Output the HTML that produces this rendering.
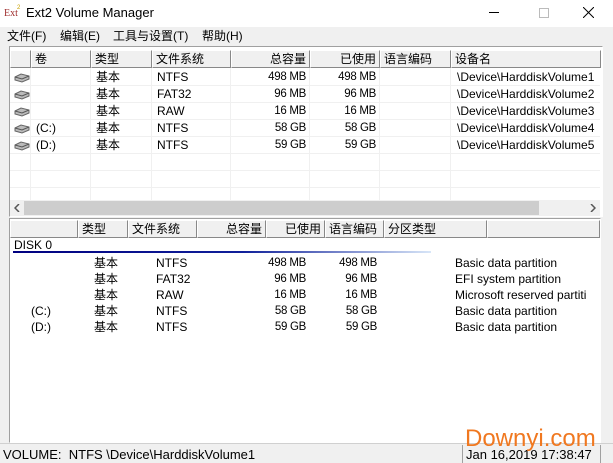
<!DOCTYPE html>
<html><head><meta charset="utf-8"><style>
*{margin:0;padding:0;box-sizing:border-box}
body{width:613px;height:463px;background:#f0f0f0;font-family:"Liberation Sans","Noto Sans CJK SC",sans-serif;font-size:12px;color:#000;position:relative;overflow:hidden}
.a{position:absolute;white-space:nowrap;line-height:15px}
.title{left:0;top:0;width:613px;height:27px;background:#fff}
.box{background:#fff;border-top:1px solid #a0a0a0;border-left:1px solid #a0a0a0;border-right:1px solid #fff;border-bottom:1px solid #fff}
.hd{background:#f0f0f0;border-right:1px solid #888;border-bottom:1px solid #888;border-top:1px solid #fff;border-left:1px solid #fff;height:18px;line-height:16px;padding:0 3px}
.vl{width:1px;background:#f0f0f0}
.hl{height:1px;background:#f0f0f0}
.r{text-align:right}
.n{font-size:11.5px;letter-spacing:-0.3px;text-align:right}
.row>span{line-height:15px}
</style></head><body>
<div class="a title"></div>
<div class="a" style="left:4px;top:6px;font-size:10px;color:#a03030;font-family:'Liberation Serif',serif">Ext</div>
<div class="a" style="left:17px;top:1px;font-size:6px;color:#c8a000">2</div>
<div class="a" style="left:26px;top:5px;font-size:13px">Ext2 Volume Manager</div>
<div class="a" style="left:489px;top:12px;width:10px;height:1px;background:#000"></div>
<div class="a" style="left:539px;top:8px;width:10px;height:10px;border:1px solid #bbb"></div>
<svg class="a" style="left:583px;top:7px" width="11" height="11"><path d="M0 0L11 11M11 0L0 11" stroke="#000" stroke-width="1"/></svg>
<div class="a" style="left:7px;top:29px">文件(F)</div>
<div class="a" style="left:60px;top:29px">编辑(E)</div>
<div class="a" style="left:113px;top:29px">工具与设置(T)</div>
<div class="a" style="left:202px;top:29px">帮助(H)</div>

<!-- top list -->
<div class="a box" style="left:9px;top:46px;width:594px;height:171px"></div>
<div class="a hd" style="left:10px;top:50px;width:21px"></div>
<div class="a hd" style="left:31px;top:50px;width:60px">卷</div>
<div class="a hd" style="left:91px;top:50px;width:61px">类型</div>
<div class="a hd" style="left:152px;top:50px;width:79px">文件系统</div>
<div class="a hd r" style="left:231px;top:50px;width:79px">总容量</div>
<div class="a hd r" style="left:310px;top:50px;width:70px">已使用</div>
<div class="a hd" style="left:380px;top:50px;width:71px">语言编码</div>
<div class="a hd" style="left:451px;top:50px;width:150px">设备名</div>
<div class="a hl" style="left:10px;top:85px;width:590px"></div>
<div class="a hl" style="left:10px;top:102px;width:590px"></div>
<div class="a hl" style="left:10px;top:119px;width:590px"></div>
<div class="a hl" style="left:10px;top:136px;width:590px"></div>
<div class="a hl" style="left:10px;top:153px;width:590px"></div>
<div class="a hl" style="left:10px;top:170px;width:590px"></div>
<div class="a hl" style="left:10px;top:187px;width:590px"></div>
<div class="a vl" style="left:30px;top:68px;height:132px"></div>
<div class="a vl" style="left:90px;top:68px;height:132px"></div>
<div class="a vl" style="left:151px;top:68px;height:132px"></div>
<div class="a vl" style="left:230px;top:68px;height:132px"></div>
<div class="a vl" style="left:309px;top:68px;height:132px"></div>
<div class="a vl" style="left:379px;top:68px;height:132px"></div>
<div class="a vl" style="left:450px;top:68px;height:132px"></div>

<div class="a row" style="left:0;top:70px">
<svg class="a" style="left:13px;top:3px" width="18" height="10"><path d="M2 4L8 1L16 3L16 6L9 9L2 7Z" fill="#bbb" stroke="#666"/><path d="M2 4L9 6L16 3" fill="none" stroke="#555"/></svg>
<span class="a" style="left:96px">基本</span><span class="a" style="left:157px">NTFS</span><span class="a n" style="left:236px;width:70px">498 MB</span><span class="a n" style="left:306px;width:70px">498 MB</span><span class="a" style="left:457px">\Device\HarddiskVolume1</span></div>
<div class="a row" style="left:0;top:87px">
<svg class="a" style="left:13px;top:3px" width="18" height="10"><path d="M2 4L8 1L16 3L16 6L9 9L2 7Z" fill="#bbb" stroke="#666"/><path d="M2 4L9 6L16 3" fill="none" stroke="#555"/></svg>
<span class="a" style="left:96px">基本</span><span class="a" style="left:157px">FAT32</span><span class="a n" style="left:236px;width:70px">96 MB</span><span class="a n" style="left:306px;width:70px">96 MB</span><span class="a" style="left:457px">\Device\HarddiskVolume2</span></div>
<div class="a row" style="left:0;top:104px">
<svg class="a" style="left:13px;top:3px" width="18" height="10"><path d="M2 4L8 1L16 3L16 6L9 9L2 7Z" fill="#bbb" stroke="#666"/><path d="M2 4L9 6L16 3" fill="none" stroke="#555"/></svg>
<span class="a" style="left:96px">基本</span><span class="a" style="left:157px">RAW</span><span class="a n" style="left:236px;width:70px">16 MB</span><span class="a n" style="left:306px;width:70px">16 MB</span><span class="a" style="left:457px">\Device\HarddiskVolume3</span></div>
<div class="a row" style="left:0;top:121px">
<svg class="a" style="left:13px;top:3px" width="18" height="10"><path d="M2 4L8 1L16 3L16 6L9 9L2 7Z" fill="#bbb" stroke="#666"/><path d="M2 4L9 6L16 3" fill="none" stroke="#555"/></svg>
<span class="a" style="left:36px">(C:)</span><span class="a" style="left:96px">基本</span><span class="a" style="left:157px">NTFS</span><span class="a n" style="left:236px;width:70px">58 GB</span><span class="a n" style="left:306px;width:70px">58 GB</span><span class="a" style="left:457px">\Device\HarddiskVolume4</span></div>
<div class="a row" style="left:0;top:138px">
<svg class="a" style="left:13px;top:3px" width="18" height="10"><path d="M2 4L8 1L16 3L16 6L9 9L2 7Z" fill="#bbb" stroke="#666"/><path d="M2 4L9 6L16 3" fill="none" stroke="#555"/></svg>
<span class="a" style="left:36px">(D:)</span><span class="a" style="left:96px">基本</span><span class="a" style="left:157px">NTFS</span><span class="a n" style="left:236px;width:70px">59 GB</span><span class="a n" style="left:306px;width:70px">59 GB</span><span class="a" style="left:457px">\Device\HarddiskVolume5</span></div>
<!-- scrollbar -->
<div class="a" style="left:10px;top:200px;width:590px;height:16px;background:#f0f0f0"></div>
<div class="a" style="left:24px;top:201px;width:515px;height:14px;background:#cdcdcd"></div>
<svg class="a" style="left:14px;top:204px" width="6" height="8"><path d="M5 0L1 4L5 8" fill="none" stroke="#555" stroke-width="1.5"/></svg>
<svg class="a" style="left:590px;top:204px" width="6" height="8"><path d="M1 0L5 4L1 8" fill="none" stroke="#555" stroke-width="1.5"/></svg>

<!-- bottom list -->
<div class="a box" style="left:9px;top:218px;width:592px;height:225px"></div>
<div class="a hd" style="left:10px;top:220px;width:68px"></div>
<div class="a hd" style="left:78px;top:220px;width:50px">类型</div>
<div class="a hd" style="left:128px;top:220px;width:69px">文件系统</div>
<div class="a hd r" style="left:197px;top:220px;width:69px">总容量</div>
<div class="a hd r" style="left:266px;top:220px;width:59px">已使用</div>
<div class="a hd" style="left:325px;top:220px;width:59px">语言编码</div>
<div class="a hd" style="left:384px;top:220px;width:103px">分区类型</div>
<div class="a hd" style="left:487px;top:220px;width:113px"></div>
<div class="a" style="left:14px;top:238px">DISK 0</div>
<div class="a" style="left:13px;top:251px;width:418px;height:2px;background:linear-gradient(90deg,#000080 0%,#10209a 55%,#d8e6f8 100%)"></div>
<div class="a row" style="left:0;top:256px">
<span class="a" style="left:94px">基本</span><span class="a" style="left:156px">NTFS</span><span class="a n" style="left:236px;width:70px">498 MB</span><span class="a n" style="left:307px;width:70px">498 MB</span><span class="a" style="left:455px">Basic data partition</span></div>
<div class="a row" style="left:0;top:272px">
<span class="a" style="left:94px">基本</span><span class="a" style="left:156px">FAT32</span><span class="a n" style="left:236px;width:70px">96 MB</span><span class="a n" style="left:307px;width:70px">96 MB</span><span class="a" style="left:455px">EFI system partition</span></div>
<div class="a row" style="left:0;top:288px">
<span class="a" style="left:94px">基本</span><span class="a" style="left:156px">RAW</span><span class="a n" style="left:236px;width:70px">16 MB</span><span class="a n" style="left:307px;width:70px">16 MB</span><span class="a" style="left:455px;width:145px;overflow:hidden">Microsoft reserved partiti</span></div>
<div class="a row" style="left:0;top:304px">
<span class="a" style="left:31px">(C:)</span><span class="a" style="left:94px">基本</span><span class="a" style="left:156px">NTFS</span><span class="a n" style="left:236px;width:70px">58 GB</span><span class="a n" style="left:307px;width:70px">58 GB</span><span class="a" style="left:455px">Basic data partition</span></div>
<div class="a row" style="left:0;top:320px">
<span class="a" style="left:31px">(D:)</span><span class="a" style="left:94px">基本</span><span class="a" style="left:156px">NTFS</span><span class="a n" style="left:236px;width:70px">59 GB</span><span class="a n" style="left:307px;width:70px">59 GB</span><span class="a" style="left:455px">Basic data partition</span></div>

<!-- status -->
<div class="a" style="left:0;top:443px;width:613px;height:1px;background:#d0d0d0"></div>
<div class="a" style="left:462px;top:445px;width:1px;height:18px;background:#a0a0a0"></div>
<div class="a" style="left:600px;top:445px;width:1px;height:18px;background:#a0a0a0"></div>
<div class="a" style="left:3px;top:447px;font-size:13px">VOLUME:&nbsp; NTFS \Device\HarddiskVolume1</div>
<div class="a" style="left:466px;top:447px;font-size:13px">Jan 16,2019 17:38:47</div>
<div class="a" style="left:465px;top:426px;font-size:24px;line-height:26px;color:#f07820">Downyi.com</div>
</body></html>
